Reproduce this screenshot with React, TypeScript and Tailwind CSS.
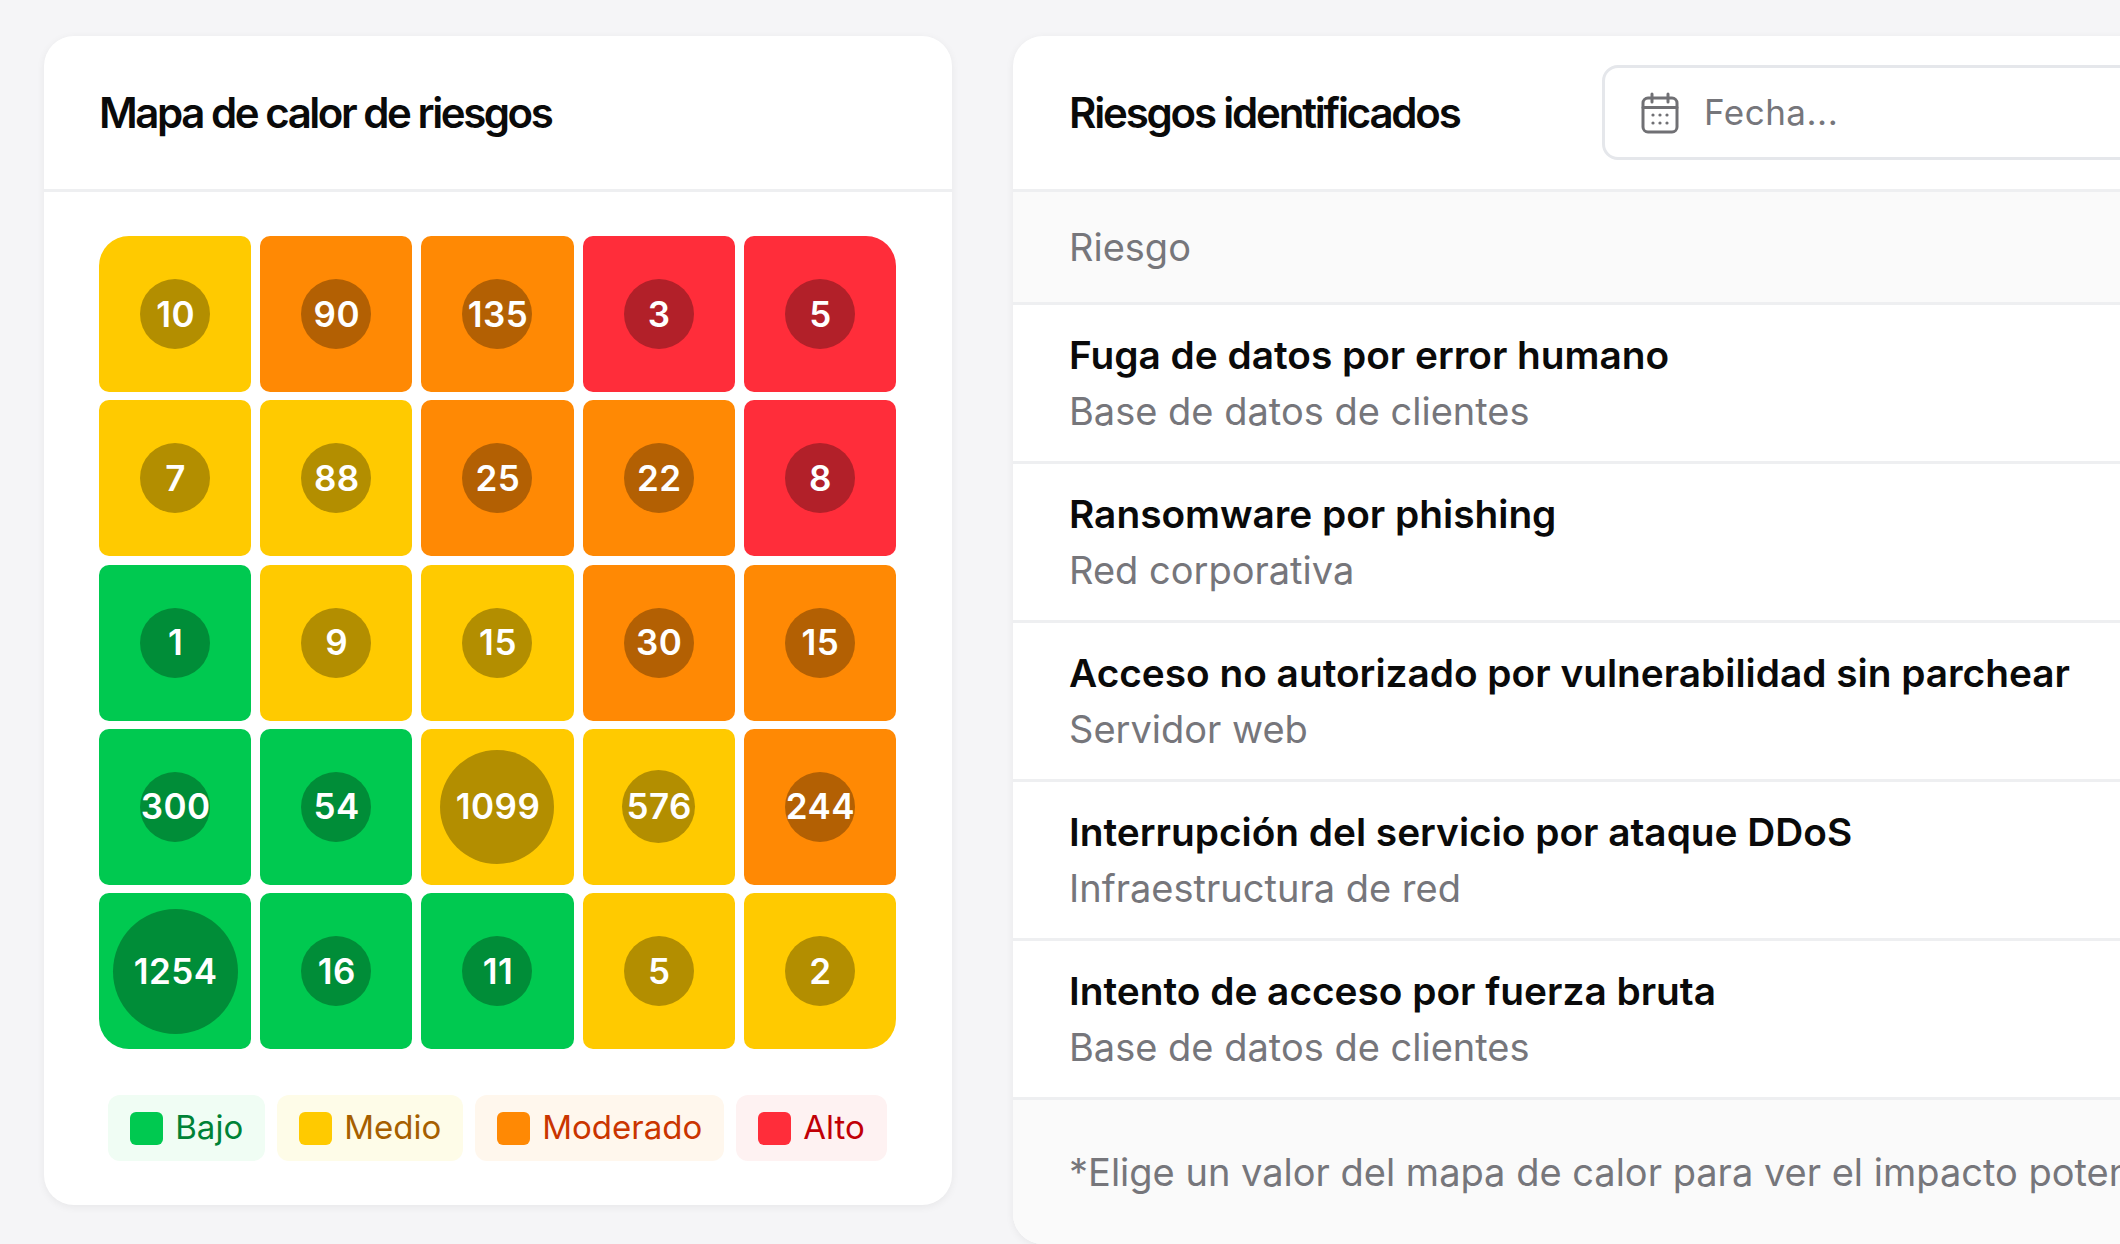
const tones = {
	green: { cell: 'bg-[#00c950]', dot: 'bg-[#008d38]' },
	yellow: { cell: 'bg-[#ffca00]', dot: 'bg-[#b38e00]' },
	orange: { cell: 'bg-[#ff8904]', dot: 'bg-[#b36003]' },
	red: { cell: 'bg-[#ff2d3a]', dot: 'bg-[#b22029]' }
}

type Tone = keyof typeof tones

const cells: { value: number; tone: Tone; dot?: string; corner?: string }[] = [
	{ value: 10, tone: 'yellow', corner: 'rounded-tl-[30px]' },
	{ value: 90, tone: 'orange' },
	{ value: 135, tone: 'orange' },
	{ value: 3, tone: 'red' },
	{ value: 5, tone: 'red', corner: 'rounded-tr-[30px]' },
	{ value: 7, tone: 'yellow' },
	{ value: 88, tone: 'yellow' },
	{ value: 25, tone: 'orange' },
	{ value: 22, tone: 'orange' },
	{ value: 8, tone: 'red' },
	{ value: 1, tone: 'green' },
	{ value: 9, tone: 'yellow' },
	{ value: 15, tone: 'yellow' },
	{ value: 30, tone: 'orange' },
	{ value: 15, tone: 'orange' },
	{ value: 300, tone: 'green' },
	{ value: 54, tone: 'green' },
	{ value: 1099, tone: 'yellow', dot: 'size-[114px]' },
	{ value: 576, tone: 'yellow', dot: 'size-[73px]' },
	{ value: 244, tone: 'orange' },
	{ value: 1254, tone: 'green', dot: 'size-[125px]', corner: 'rounded-bl-[30px]' },
	{ value: 16, tone: 'green' },
	{ value: 11, tone: 'green' },
	{ value: 5, tone: 'yellow' },
	{ value: 2, tone: 'yellow', corner: 'rounded-br-[30px]' }
]

const legend = [
	{ label: 'Bajo', pill: 'bg-[#f0fdf4] text-[#008236]', box: 'bg-[#00c950]' },
	{ label: 'Medio', pill: 'bg-[#fefce8] text-[#a65f00]', box: 'bg-[#ffca00]' },
	{ label: 'Moderado', pill: 'bg-[#fff7ed] text-[#ca3500]', box: 'bg-[#ff8904]' },
	{ label: 'Alto', pill: 'bg-[#fef2f2] text-[#c10007]', box: 'bg-[#ff2d3a]' }
]

const risks = [
	{ title: 'Fuga de datos por error humano', asset: 'Base de datos de clientes' },
	{ title: 'Ransomware por phishing', asset: 'Red corporativa' },
	{ title: 'Acceso no autorizado por vulnerabilidad sin parchear', asset: 'Servidor web' },
	{ title: 'Interrupción del servicio por ataque DDoS', asset: 'Infraestructura de red' },
	{ title: 'Intento de acceso por fuerza bruta', asset: 'Base de datos de clientes' }
]

const CalendarIcon = () => (
	<svg width="38" height="42" viewBox="0 0 38 42" fill="none" stroke="#707074" strokeWidth="3" strokeLinecap="round" className="shrink-0">
		<rect x="2" y="6" width="34" height="34" rx="5" />
		<path d="M2 15.5h34M11 2v8M27 2v8" />
		<g fill="#707074" stroke="none">
			<circle cx="12" cy="23" r="1.6" />
			<circle cx="19" cy="23" r="1.6" />
			<circle cx="26" cy="23" r="1.6" />
			<circle cx="12" cy="31" r="1.6" />
			<circle cx="19" cy="31" r="1.6" />
			<circle cx="26" cy="31" r="1.6" />
		</g>
	</svg>
)

const App = () => {
	return (
		<div className="flex h-[1244px] w-[2120px] items-start gap-[61px] overflow-hidden bg-[#f5f5f7] pt-[36px] pl-[44px] font-['Inter',sans-serif]">
			{/* Heat map */}
			<section className="w-[908px] shrink-0 rounded-[30px] bg-white shadow-[0_2px_8px_rgba(0,0,0,0.06)]">
				<header className="flex h-[156px] items-center border-b-[3px] border-[#eeeff1] px-[55px]">
					<h2 className="text-[42px] font-semibold tracking-[-2.45px] text-[#0a0a0a]">
						Mapa de calor de riesgos
					</h2>
				</header>

				<div className="pt-[44px] pr-[56px] pb-[44px] pl-[55px]">
					<div className="grid grid-cols-5 gap-x-[9px] gap-y-[8.25px]">
						{cells.map((cell, i) => (
							<div
								key={i}
								className={`flex h-[156px] items-center justify-center rounded-[10px] ${tones[cell.tone].cell} ${cell.corner ?? ''}`}
							>
								<div
									className={`flex items-center justify-center rounded-full pl-[1px] text-[35px] leading-none font-semibold tracking-[0.5px] text-white ${tones[cell.tone].dot} ${cell.dot ?? 'size-[70px]'}`}
								>
									{cell.value}
								</div>
							</div>
						))}
					</div>

					<div className="mt-[46px] flex justify-center gap-[12px]">
						{legend.map((item) => (
							<div
								key={item.label}
								className={`flex h-[66px] items-center gap-[12px] rounded-[12px] px-[22px] text-[33px] ${item.pill}`}
							>
								<span className={`size-[33px] rounded-[6px] ${item.box}`} />
								{item.label}
							</div>
						))}
					</div>
				</div>
			</section>

			{/* Risk list */}
			<section className="w-[1500px] shrink-0 overflow-hidden rounded-[30px] bg-white shadow-[0_2px_8px_rgba(0,0,0,0.06)]">
				<header className="flex h-[156px] items-center border-b-[3px] border-[#eeeff1] pl-[56px]">
					<h2 className="w-[533px] text-[42px] font-semibold tracking-[-2.2px] text-[#0a0a0a]">
						Riesgos identificados
					</h2>
					<div className="flex h-[95px] flex-1 items-center gap-[25px] rounded-[16px] border-[3px] border-[#e5e7eb] pl-[36px]">
						<CalendarIcon />
						<span className="text-[35px] tracking-[0.5px] text-[#76767b]">Fecha...</span>
					</div>
				</header>

				<div className="flex h-[113px] items-center border-b-[3px] border-[#eeeff1] bg-[#fafafa] pl-[56px] text-[38px] text-[#76767b]">
					Riesgo
				</div>

				{risks.map((risk) => (
					<div
						key={risk.title}
						className="flex h-[159px] flex-col justify-center gap-[8px] border-b-[3px] border-[#eeeff1] pl-[56px]"
					>
						<div className="text-[38.8px] leading-[48px] font-semibold text-[#0a0a0a]">{risk.title}</div>
						<div className="text-[38px] leading-[48px] text-[#76767b]">{risk.asset}</div>
					</div>
				))}

				<div className="flex h-[144px] items-center bg-[#fafafa] pl-[56px] text-[38px] whitespace-nowrap text-[#76767b]">
					*Elige un valor del mapa de calor para ver el impacto potencial en tu organización
				</div>
			</section>
		</div>
	)
}

export default App
